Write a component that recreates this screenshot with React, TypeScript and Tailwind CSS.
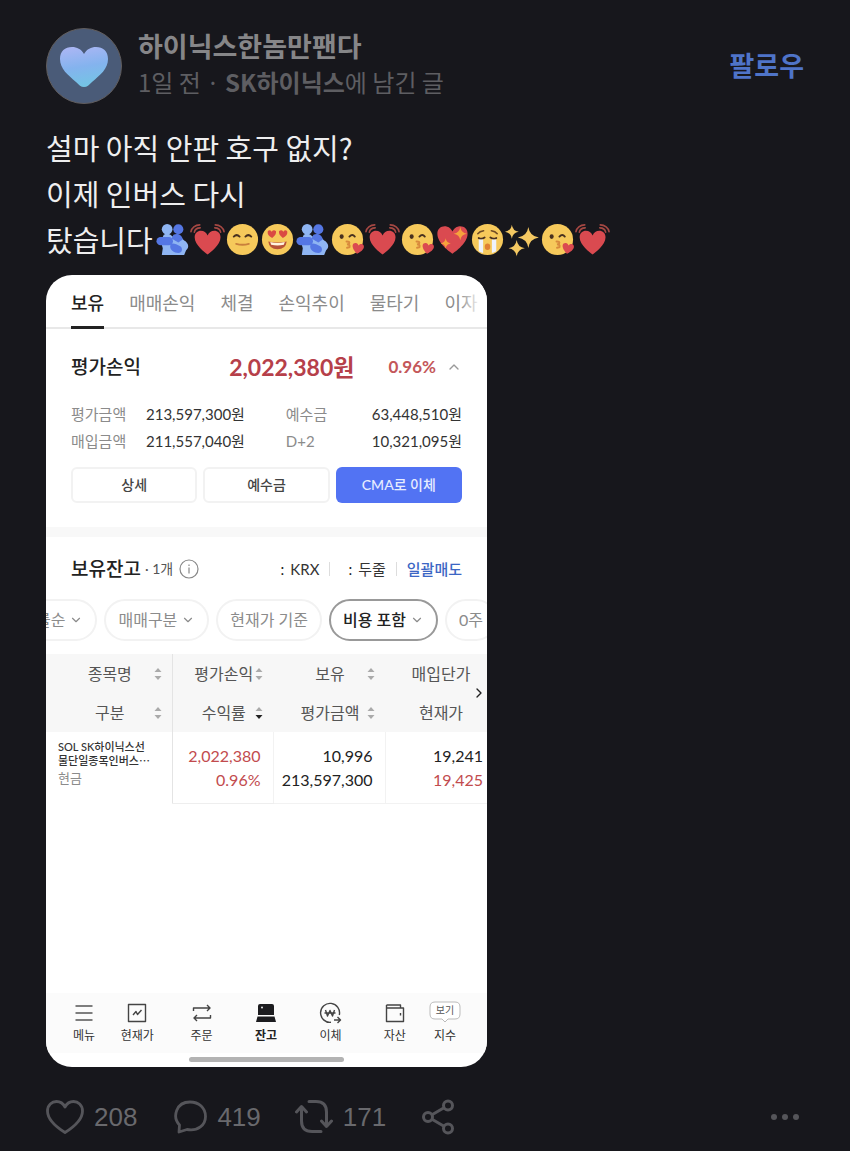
import React, { useState } from 'react';
import { ChevronDown, ChevronRight, ChevronUp } from 'lucide-react';

const HEART = 'M18 33C15 31 4 23 4 14.500C4 10 7.200 7.500 10.700 7.500C14 7.500 16.800 9.500 18 12.500C19.200 9.500 22 7.500 25.300 7.500C28.800 7.500 32 10 32 14.500C32 23 21 31 18 33Z';

const Hug = () => (
  <>
    <path d="M9 13C12 11 16 12 18 15H26L30 19C34 21 36 26 32 29L30 34H7L8 27L6 20Z" fill="#8fb5f3" />
    <circle cx="24" cy="7.500" r="5.200" fill="#5577e4" />
    <path d="M19 13C23 11 28 13 28.500 18L24 21L17 17Z" fill="#5577e4" />
    <circle cx="12.500" cy="7.500" r="5.500" fill="#8fb5f3" />
    <rect x="1.500" y="15.500" width="17" height="8.500" rx="4.250" fill="#5577e4" />
    <path d="M16 23C18 21 22 23 26 25C29 27 28 32 24 32C20 32 14 29 16 23Z" fill="#5577e4" />
  </>
);

const BeatingHeart = () => (
  <>
    <path d={HEART} fill="#da4a50" transform="translate(1 2) scale(.950)" />
    <g fill="none" stroke="#a64843" strokeWidth="1.700" strokeLinecap="round">
      <path d="M1 10C1.500 6 5.500 3 10 3M4.500 10.500C5 8 7.500 6 10.500 6" />
      <path d="M35 10C34.500 6 30.500 3 26 3M31.500 10.500C31 8 28.500 6 25.500 6" />
    </g>
  </>
);

const Face = ({ children }: { children: React.ReactNode }) => (
  <>
    <circle cx="18" cy="18" r="16" fill="#f6c95b" />
    {children}
  </>
);

const Smile = () => (
  <Face>
    <path d="M9 15Q12 12 15 15M21 15Q24 12 27 15" fill="none" stroke="#49311f" strokeWidth="2" strokeLinecap="round" />
    <path d="M11.500 22.500Q18 24.500 24.500 22.500" fill="none" stroke="#c9803c" strokeWidth="2" strokeLinecap="round" />
  </Face>
);

const HeartEyes = () => (
  <Face>
    <path d="M8 9.500Q10 7.500 12 10Q14 7.500 16.500 9.500Q17 13 12.500 16.500Q7 13.500 8 9.500ZM19.500 9.500Q22 7.500 24 10Q26 7.500 28 9.500Q29 13.500 23.500 16.500Q19 13 19.500 9.500Z" fill="#da4a43" />
    <path d="M8.500 20Q18 22 27.500 20Q26.500 28 18 28Q9.500 28 8.500 20Z" fill="#b85338" />
    <path d="M10.500 20.500Q18 22.500 25.500 20.500L24.500 23.500Q18 25 11.500 23.500Z" fill="#fff5df" />
  </Face>
);

const Kiss = () => (
  <Face>
    <ellipse cx="12" cy="15" rx="2.100" ry="2.500" fill="#49311f" />
    <path d="M20 15Q23 11.800 25.500 15" fill="none" stroke="#49311f" strokeWidth="2" strokeLinecap="round" />
    <path d="M17 20Q21 20 19.500 22.500L17.500 23Q21 23 20 26L17.500 26.500" fill="none" stroke="#d88a3c" strokeWidth="2" strokeLinecap="round" />
    <path d={HEART} fill="#da4a50" transform="rotate(10 29 28) translate(21 19) scale(.42)" />
  </Face>
);

const STAR = 'M0-8Q1-1 8 0Q1 1 0 8Q-1 1-8 0Q-1-1 0-8Z';

const SparkleHeart = () => (
  <>
    <path d={HEART} fill="#da4a50" transform="translate(-2 -4) scale(1.110)" />
    <path d={STAR} fill="#f6a23c" transform="translate(26 12) scale(.85)" />
    <path d={STAR} fill="#f6a23c" transform="translate(11 22) scale(.65)" />
  </>
);

const Crying = () => (
  <Face>
    <path d="M8 12Q10 9.500 14 9M22 9Q26 9.500 28 12" fill="none" stroke="#6f4b25" strokeWidth="1.600" strokeLinecap="round" />
    <path d="M9 16.500Q12 18 15 16M21 16Q24 18 27 16.500" fill="none" stroke="#49311f" strokeWidth="2" strokeLinecap="round" />
    <path d="M9 18H13.500V32Q11 31 9 30ZM22.500 18H27V30Q25 31 22.500 32Z" fill="#eef2fb" />
    <ellipse cx="18" cy="25.500" rx="2.800" ry="3.300" fill="#df8034" />
  </Face>
);

const Sparkles = () => (
  <g fill="#f4c862">
    <path d={STAR} transform="translate(24 16) scale(1.350)" />
    <path d={STAR} transform="translate(7 10) scale(.9)" />
    <path d={STAR} transform="translate(12 27) scale(1.050)" />
  </g>
);

const emojis = [
  { label: '포옹', Icon: Hug },
  { label: '두근거리는 하트', Icon: BeatingHeart },
  { label: '미소', Icon: Smile },
  { label: '하트 눈', Icon: HeartEyes },
  { label: '포옹', Icon: Hug },
  { label: '키스', Icon: Kiss },
  { label: '두근거리는 하트', Icon: BeatingHeart },
  { label: '키스', Icon: Kiss },
  { label: '반짝이는 하트', Icon: SparkleHeart },
  { label: '엉엉 우는 얼굴', Icon: Crying },
  { label: '반짝임', Icon: Sparkles },
  { label: '키스', Icon: Kiss },
  { label: '두근거리는 하트', Icon: BeatingHeart },
];

const tabs = ['보유', '매매손익', '체결', '손익추이', '물타기', '이자'];

const SortIcon = ({ down = false }: { down?: boolean }) => (
  <svg viewBox="0 0 8 14" className="h-3.5 w-2 shrink-0" aria-hidden="true">
    <path d="M4 1L7.500 5H.5Z" fill="#aaa" />
    <path d="M4 13L7.500 9H.5Z" fill={down ? '#222' : '#aaa'} />
  </svg>
);

const HeadCell = ({ label, sort = true, down = false, divider = false }: { label: string; sort?: boolean; down?: boolean; divider?: boolean }) => (
  <th scope="col" className={`h-[39px] p-0 font-normal ${divider ? 'border-l border-[#e4e4e4]' : ''}`}>
    <div className="flex items-center whitespace-nowrap pl-5 pr-2.5">
      <span className="flex-1 text-center">{label}</span>
      {sort && <SortIcon down={down} />}
    </div>
  </th>
);

const Pill = ({ label, active = false, arrow = true }: { label: string; active?: boolean; arrow?: boolean }) => (
  <button
    className={`flex h-[42px] shrink-0 items-center gap-1 rounded-full border-2 px-3 ${
      active ? 'border-[#999] font-medium text-[#222]' : 'border-[#f2f2f2] text-[#8b8b8b]'
    }`}
  >
    {label}
    {arrow && <ChevronDown className="h-3.5 w-3.5 text-[#8b8b8b]" />}
  </button>
);

const navItems = [
  {
    label: '현재가',
    icon: <path d="M3.500 3.500H20.500V20.500H3.500ZM8 14L11 10.500L12.500 13.500L16.500 9" />,
  },
  {
    label: '주문',
    icon: <path d="M3.500 10V7H20M17 4L20 7L17 10M20.500 14V17H4M7 14L4 17L7 20" />,
  },
  {
    label: '잔고',
    active: true,
    icon: (
      <g stroke="none">
        <path d="M6 3H18Q20 3 20 5V14H4V5Q4 3 6 3ZM3.500 15.500H20.500L22 21H2Z" fill="#1c1c1f" />
        <circle cx="8" cy="6.500" r="1" fill="#eee" />
      </g>
    ),
  },
  {
    label: '이체',
    icon: (
      <>
        <path d="M13 21.300A9.500 9.500 0 1 1 21.300 14M16 19H22M19.500 16L22.500 19L19.500 22" />
        <path d="M7.500 9L9.500 15L12 9.500L14.500 15L16.500 9M6.500 12H17.500" />
      </>
    ),
  },
  {
    label: '자산',
    icon: <path d="M3.500 4H17.500V7M3.500 4V20.500H20.500V7H3.500M17.500 12V14.500" />,
  },
];

const Portfolio = () => {
  const [tab, setTab] = useState('보유');

  return (
    <section className="w-full max-w-[441px] overflow-hidden rounded-[26px] bg-white font-['Lato','Noto_Sans_CJK_KR',sans-serif] text-[#333]">
      <nav className="relative flex gap-[25px] overflow-hidden whitespace-nowrap pl-[25px] pt-4 shadow-[inset_0_-2px_0_#e8e8e8]">
        {tabs.map((name) => (
          <button
            key={name}
            onClick={() => setTab(name)}
            className={`shrink-0 border-b-[3px] pb-[11px] text-lg leading-6 ${
              tab === name ? 'border-[#222] font-medium text-[#222]' : 'border-transparent text-[#8b8b8b]'
            }`}
          >
            {name}
          </button>
        ))}
        <div className="pointer-events-none absolute bottom-1 right-0 top-0 w-7 bg-linear-to-r from-transparent to-white to-80%" />
      </nav>

      <div className="px-[25px] pb-6 pt-6">
        <div className="flex items-center leading-7">
          <h2 className="flex-1 text-[19px] font-medium text-[#222]">평가손익</h2>
          <strong className="text-[23px] text-[#b6404a]">2,022,380원</strong>
          <span className="ml-[34px] text-[17px] font-bold text-[#c4575a]">0.96%</span>
          <button aria-label="접기" className="ml-2.5 text-[#999]">
            <ChevronUp className="h-4 w-4" />
          </button>
        </div>
        <dl className="mt-5 grid grid-cols-[75px_1fr_86px_auto] text-[15px] leading-[27px]">
          <dt className="text-[#8b8b8b]">평가금액</dt>
          <dd>213,597,300원</dd>
          <dt className="text-[#8b8b8b]">예수금</dt>
          <dd className="text-right">63,448,510원</dd>
          <dt className="text-[#8b8b8b]">매입금액</dt>
          <dd>211,557,040원</dd>
          <dt className="text-[#8b8b8b]">D+2</dt>
          <dd className="text-right">10,321,095원</dd>
        </dl>
        <div className="mt-3 grid grid-cols-3 gap-1.5 text-sm">
          <button className="h-9 rounded-md border-2 border-[#f2f2f2] font-medium text-[#444]">상세</button>
          <button className="h-9 rounded-md border-2 border-[#f2f2f2] font-medium text-[#444]">예수금</button>
          <button className="h-9 rounded-md bg-[#5273f3] font-medium text-[#e6ecff]">CMA로 이체</button>
        </div>
      </div>

      <div className="h-2.5 bg-[#f8f8f8]" />

      <div className="flex items-center px-[25px] pt-[18px] text-[15px] leading-7">
        <h2 className="text-[19px] font-medium text-[#222]">보유잔고</h2>
        <span className="ml-1 text-sm leading-7 text-[#555]">· 1개</span>
        <button aria-label="안내" className="ml-1.5">
          <svg viewBox="0 0 20 20" className="h-5 w-5" fill="none" stroke="#888" strokeWidth="1.200">
            <circle cx="10" cy="10" r="9" />
            <path d="M10 5.500V7M10 8.500V14.500" />
          </svg>
        </button>
        <div className="ml-auto flex items-center">
          <button className="flex items-center gap-1.5"><span className="text-[#222]">:</span>KRX</button>
          <span className="mx-2.5 h-3.5 w-px bg-[#ddd]" />
          <button className="ml-2 flex items-center gap-1.5"><span className="text-[#222]">:</span>두줄</button>
          <span className="mx-2.5 h-3.5 w-px bg-[#ddd]" />
          <button className="font-medium text-[#3c66c4]">일괄매도</button>
        </div>
      </div>

      <div className="mt-4 flex gap-[7px] overflow-hidden whitespace-nowrap text-base">
        <div className="-ml-6 shrink-0">
          <Pill label="률순" />
        </div>
        <Pill label="매매구분" />
        <Pill label="현재가 기준" arrow={false} />
        <Pill label="비용 포함" active />
        <Pill label="0주" arrow={false} />
      </div>

      <div className="relative mt-[13px] pb-[189px]">
        <table className="w-full table-fixed text-base">
          <colgroup>
            <col className="w-[126px]" />
            <col className="w-[101px]" />
            <col className="w-[112px]" />
            <col />
          </colgroup>
          <thead className="bg-[#f7f7f7] text-[#555]">
            <tr>
              <HeadCell label="종목명" />
              <HeadCell label="평가손익" divider />
              <HeadCell label="보유" />
              <HeadCell label="매입단가" sort={false} />
            </tr>
            <tr>
              <HeadCell label="구분" />
              <HeadCell label="수익률" down divider />
              <HeadCell label="평가금액" />
              <HeadCell label="현재가" sort={false} />
            </tr>
          </thead>
          <tbody className="leading-6">
            <tr className="h-[71px]">
              <td className="whitespace-nowrap pb-2 pl-3 text-[11px] font-medium leading-[14px]">
                SOL SK하이닉스선<br />
                물단일종목인버스⋯
                <div className="text-[13px] font-normal leading-5 text-[#8b8b8b]">현금</div>
              </td>
              <td className="border-b border-l border-[#eee] border-l-[#e4e4e4] pr-3 pt-0.5 text-right text-[#c24b4e]">
                2,022,380<br />0.96%
              </td>
              <td className="border-b border-l border-[#f2f2f2] pr-3 pt-0.5 text-right text-[#222]">
                10,996<br />213,597,300
              </td>
              <td className="border-b border-l border-[#f2f2f2] pr-1 pt-0.5 text-right text-[#222]">
                19,241<br />
                <span className="text-[#c24b4e]">19,425</span>
              </td>
            </tr>
          </tbody>
        </table>
        <button aria-label="다음 열" className="absolute right-0 top-[31px] text-[#222]">
          <ChevronRight className="h-4 w-4" />
        </button>
      </div>

      <nav className="flex bg-[#fbfbfb] pb-2 pl-[17px] pr-6 pt-2 text-xs leading-[18px]">
        <a href="#menu" className="flex w-[42px] flex-col items-center gap-0.5">
          <svg viewBox="0 0 24 24" className="h-6 w-6" stroke="#555" strokeWidth="1.500">
            <path d="M3.500 5H20.500M3.500 12H20.500M3.500 19H20.500" />
          </svg>
          메뉴
        </a>
        {navItems.map((item) => (
          <a key={item.label} href="#" className={`flex flex-1 flex-col items-center gap-0.5 ${item.active ? 'font-bold text-[#222]' : ''}`}>
            <svg viewBox="0 0 24 24" className="h-6 w-6" fill="none" stroke="#444" strokeWidth="1.400" strokeLinejoin="round">
              {item.icon}
            </svg>
            {item.label}
          </a>
        ))}
        <a href="#index" className="flex w-9 flex-col items-center gap-0.5">
          <span className="relative flex h-6 items-start">
            <svg viewBox="0 0 32 24" className="h-6 w-8" fill="#fff" stroke="#bbb">
              <path d="M6 1H26Q31 1 31 6V13Q31 18 26 18H19L16 21L13 18H6Q1 18 1 13V6Q1 1 6 1Z" />
            </svg>
            <span className="absolute inset-x-0 top-0 text-center text-[10px] text-[#555]">보기</span>
          </span>
          지수
        </a>
      </nav>
      <div className="mx-auto mb-[5px] mt-1 h-[5px] w-[35%] rounded-full bg-[#b3b3b3]" />
    </section>
  );
};

const App = () => {
  return (
    <main className="min-h-screen bg-[#17171c] px-[46px] pb-4 pt-7 font-['Noto_Sans_CJK_KR',sans-serif]">
      <header className="flex items-center">
        <svg viewBox="0 0 76 76" className="h-[76px] w-[76px] shrink-0" role="img" aria-label="프로필">
          <defs>
            <linearGradient id="avatar" x1="0.300" y1="0" x2="0.500" y2="1">
              <stop offset="0" stopColor="#aab6f4" />
              <stop offset=".5" stopColor="#84b3ee" />
              <stop offset="1" stopColor="#73c5e4" />
            </linearGradient>
          </defs>
          <circle cx="38" cy="38" r="37.500" fill="#4a5b78" stroke="#615d5d" />
          <path d="M38 59C35 59 33 57 30 54C22 47 14 41 14 31C14 23 19 19 26 19C31 19 35 21 38 26C41 21 45 19 50 19C57 19 62 23 62 31C62 41 54 47 46 54C43 57 41 59 38 59Z" fill="url(#avatar)" />
        </svg>
        <div className="ml-4 flex-1 pb-1">
          <h1 className="text-[27px] font-bold leading-9 text-[#868688]">하이닉스한놈만팬다</h1>
          <p className="text-2xl leading-9 text-[#5e5e62]">
            1일 전 · <span className="font-bold">SK하이닉스</span>에 남긴 글
          </p>
        </div>
        <button className="pb-0.5 text-[27px] font-bold text-[#4f74c8]">팔로우</button>
      </header>

      <div className="mb-[13px] mt-5 text-[29px] leading-[46px] text-[#eeeeef]">
        <p>설마 아직 안판 호구 없지?</p>
        <p>이제 인버스 다시</p>
        <p className="flex flex-wrap items-center">
          <span className="mr-0.5">탔습니다</span>
          {emojis.map(({ label, Icon }, i) => (
            <svg key={i} viewBox="0 0 36 36" className="h-[35px] w-[35px]" role="img" aria-label={label}>
              <Icon />
            </svg>
          ))}
        </p>
      </div>

      <Portfolio />

      <footer className="mt-8 flex items-center font-['Liberation_Sans',sans-serif] text-[26px] leading-9 text-[#69696d]">
        <button className="flex items-center gap-2.5">
          <svg viewBox="0 0 38 36" className="h-9 w-[38px]" fill="none" stroke="#55555a" strokeWidth="2.800" strokeLinejoin="round">
            <path d="M19 33.500C15 31 1.500 22 1.500 12C1.500 6 6 2.500 10.500 2.500C14 2.500 17 4 19 8C21 4 24 2.500 27.500 2.500C32 2.500 36.500 6 36.500 12C36.500 22 23 31 19 33.500Z" />
          </svg>
          208
        </button>
        <button className="ml-9 flex items-center gap-2.5">
          <svg viewBox="0 0 34 36" className="h-9 w-[34px]" fill="none" stroke="#55555a" strokeWidth="2.800" strokeLinejoin="round">
            <path d="M6 33L6.500 26C-1 18 3 3 17 3C26 3 32.500 9 32.500 17.500C32.500 26 25 32.500 14 30.500Z" />
          </svg>
          419
        </button>
        <button className="ml-[34px] flex items-center gap-2.5">
          <svg viewBox="0 0 38 36" className="h-9 w-[38px]" fill="none" stroke="#55555a" strokeWidth="3" strokeLinecap="round" strokeLinejoin="round">
            <path d="M1.500 13L6.500 7.500L11.500 13M6.500 8V22Q6.500 32.500 17 32.500H26" />
            <path d="M26.500 22L31.500 27.500L36.500 22M31.500 27V13Q31.500 2.500 21 2.500H14" />
          </svg>
          171
        </button>
        <button aria-label="공유" className="ml-9">
          <svg viewBox="0 0 32 36" className="h-9 w-8" fill="none" stroke="#55555a" strokeWidth="3">
            <circle cx="6" cy="18" r="4.500" />
            <circle cx="26" cy="6.500" r="4.500" />
            <circle cx="26" cy="29.500" r="4.500" />
            <path d="M10 15.700L22 8.800M10 20.300L22 27.200" />
          </svg>
        </button>
        <button aria-label="더보기" className="ml-auto mr-1">
          <svg viewBox="0 0 30 8" className="h-2 w-[30px]" fill="#55555a">
            <circle cx="4" cy="4" r="3" />
            <circle cx="15" cy="4" r="3" />
            <circle cx="26" cy="4" r="3" />
          </svg>
        </button>
      </footer>
    </main>
  );
};

export default App;
